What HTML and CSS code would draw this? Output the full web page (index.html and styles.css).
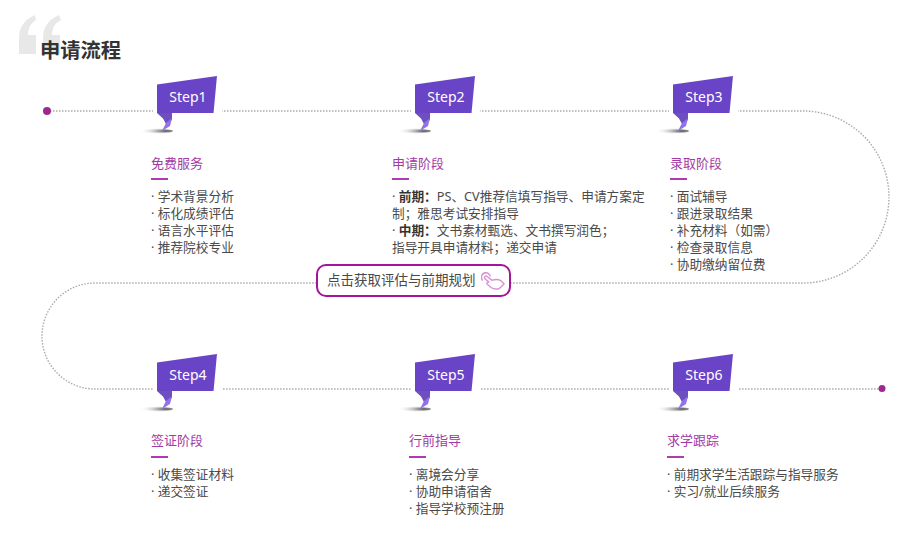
FILE: index.html
```html
<!DOCTYPE html>
<html lang="zh-CN">
<head>
<meta charset="utf-8">
<title>申请流程</title>
<link rel="stylesheet" href="styles.css">
</head>
<body>
<main class="stage">
  <svg class="route" width="900" height="556" viewBox="0 0 900 556" aria-hidden="true">
    <path class="route-line" d="M47 111H803A86 86 0 0 1 803 283H95A53 53 0 0 0 95 389H882"/>
    <circle class="route-dot" cx="47" cy="111" r="4"/>
    <circle class="route-dot" cx="882" cy="388.500" r="3.500"/>
  </svg>
  <svg class="quote" width="46" height="42" viewBox="0 0 46 42" aria-hidden="true">
    <path d="M17 1C8 5 1 12 1 24V40H18V21H10C10 14 13 9 18 6ZM41 1C32 5 25 12 25 24V40H42V21H34C34 14 37 9 43 6Z"/>
  </svg>
  <h1 class="title">申请流程</h1>

  <section class="row row-top">
    <article class="step step-a">
      <div class="flag"><svg class="flag-art" width="60" height="57" viewBox="0 0 60 57" aria-hidden="true"><use href="#flag"/></svg><span>Step1</span></div>
      <h2>免费服务</h2>
      <ul><li>学术背景分析</li><li>标化成绩评估</li><li>语言水平评估</li><li>推荐院校专业</li></ul>
    </article>
    <article class="step step-b">
      <div class="flag"><svg class="flag-art" width="60" height="57" viewBox="0 0 60 57" aria-hidden="true"><use href="#flag"/></svg><span>Step2</span></div>
      <h2>申请阶段</h2>
      <p>· <b>前期：</b>PS、CV推荐信填写指导、申请方案定制；雅思考试安排指导</p>
      <p>· <b>中期：</b>文书素材甄选、文书撰写润色；<br>指导开具申请材料；递交申请</p>
    </article>
    <article class="step step-c">
      <div class="flag"><svg class="flag-art" width="60" height="57" viewBox="0 0 60 57" aria-hidden="true"><use href="#flag"/></svg><span>Step3</span></div>
      <h2>录取阶段</h2>
      <ul><li>面试辅导</li><li>跟进录取结果</li><li>补充材料（如需）</li><li>检查录取信息</li><li>协助缴纳留位费</li></ul>
    </article>
  </section>

  <a class="cta" href="#">点击获取评估与前期规划
    <svg width="24" height="18" viewBox="0 0 24 18" aria-hidden="true">
      <path d="M1.800 8.500A4.500 4.500 0 1 1 9.300 4.500"/>
      <path d="M3.700 6.500C2.800 5 4.800 3.200 6.200 4.500L10.800 8.200L15 7.500C18 7.300 21 9 23 12L18 16.800C15 17.300 12 17 10 15.500L6.300 12.300C5.300 11 6.800 9.500 8.200 10.300Z"/>
    </svg>
  </a>

  <section class="row row-bottom">
    <article class="step">
      <div class="flag"><svg class="flag-art" width="60" height="57" viewBox="0 0 60 57" aria-hidden="true"><use href="#flag"/></svg><span>Step4</span></div>
      <h2>签证阶段</h2>
      <ul><li>收集签证材料</li><li>递交签证</li></ul>
    </article>
    <article class="step">
      <div class="flag"><svg class="flag-art" width="60" height="57" viewBox="0 0 60 57" aria-hidden="true"><use href="#flag"/></svg><span>Step5</span></div>
      <h2>行前指导</h2>
      <ul><li>离境会分享</li><li>协助申请宿舍</li><li>指导学校预注册</li></ul>
    </article>
    <article class="step">
      <div class="flag"><svg class="flag-art" width="60" height="57" viewBox="0 0 60 57" aria-hidden="true"><use href="#flag"/></svg><span>Step6</span></div>
      <h2>求学跟踪</h2>
      <ul><li>前期求学生活跟踪与指导服务</li><li>实习/就业后续服务</li></ul>
    </article>
  </section>

  <svg class="defs" width="0" height="0" aria-hidden="true">
    <defs>
      <radialGradient id="shade" cx="0.800" cy="0.500" r="0.800">
        <stop offset="0" stop-color="#444"/>
        <stop offset="1" stop-color="#fff" stop-opacity="0"/>
      </radialGradient>
      <g id="flag">
        <rect x="-4" y="30" width="69" height="8" fill="#fff"/>
        <ellipse cx="-1" cy="55" rx="17" ry="2.500" fill="url(#shade)"/>
        <path d="M0 37L6 42.500L9 48L15 44L15 37Z" fill="#6d4fc0"/>
        <path d="M9 47L5 55L13 50L15 42Z" fill="#9272e6"/>
        <path d="M0 8.500L60 0L56.500 37H0Z" fill="#6a44c6"/>
      </g>
    </defs>
  </svg>
</main>
</body>
</html>
```
FILE: styles.css
```css
* {
  box-sizing: border-box;
}

html,
body {
  margin: 0;
  background: #fff;
}

.stage {
  position: relative;
  width: 900px;
  height: 556px;
  overflow: hidden;
  font-family: "Noto Sans", "Noto Sans CJK SC", sans-serif;
  font-size: 12.700px;
  line-height: 17px;
  color: #4a4a4a;
}

.route {
  position: absolute;
  left: 0;
  top: 0;
}

.route-line {
  fill: none;
  stroke: #aaa;
  stroke-width: 1.400;
  stroke-dasharray: 1.500 1.500;
}

.route-dot {
  fill: #9c2a8e;
}

.quote {
  position: absolute;
  left: 18px;
  top: 14px;
  fill: #e8e8e8;
}

.defs {
  position: absolute;
}

.title {
  position: relative;
  margin: 0;
  height: 76px;
  padding: 36px 0 0 40px;
  font-size: 20.300px;
  line-height: 28px;
  font-weight: 700;
  color: #333;
}

.row {
  position: relative;
  display: grid;
  padding-left: 151px;
}

.row-top {
  grid-template-columns: 241px 278px 1fr;
  height: 188px;
}

.row-bottom {
  grid-template-columns: 258px 258px 1fr;
  margin-top: 57px;
}

.flag {
  position: relative;
  display: flex;
  align-items: center;
  justify-content: center;
  width: 60px;
  height: 37px;
  margin-left: 6px;
  padding: 5px 0 0 2px;
  font-size: 14px;
  line-height: 20px;
  color: #fff;
}

.flag-art {
  position: absolute;
  left: 0;
  top: 0;
  overflow: visible;
}

.flag span {
  position: relative;
}

.step-b .flag {
  margin-left: 23px;
}

.step-c .flag {
  margin-left: 3px;
}

.row-bottom .step:last-child .flag {
  margin-left: 6px;
}

.step h2 {
  position: relative;
  margin: 41px 0 0;
  height: 27px;
  font-size: 13px;
  line-height: 18px;
  font-weight: 400;
  color: #a43aa3;
}

.row-bottom .step h2 {
  margin-top: 40px;
  height: 28px;
}

.step h2::after {
  content: "";
  position: absolute;
  left: 0;
  top: 24px;
  width: 17px;
  height: 1.500px;
  background: #b03ab0;
}

.row-bottom .step h2::after {
  top: 25px;
}

.step ul {
  margin: 7px 0 0;
  padding: 0;
  list-style: none;
}

.step li::before {
  content: "· ";
}

.step p {
  position: relative;
  width: 258px;
  margin: 0;
}

.step h2 + p {
  margin-top: 7px;
}

.step b {
  font-weight: 700;
  color: #333;
}

.cta {
  position: relative;
  display: flex;
  align-items: center;
  gap: 5px;
  width: 195px;
  height: 33px;
  margin-left: 316px;
  padding-left: 9px;
  border: 2px solid #a3159a;
  border-radius: 10px;
  background: #fff;
  font-size: 13.500px;
  color: #4a4a4a;
  text-decoration: none;
}

.cta svg {
  fill: none;
  stroke: #d795d7;
  stroke-width: 1.500;
}
```
